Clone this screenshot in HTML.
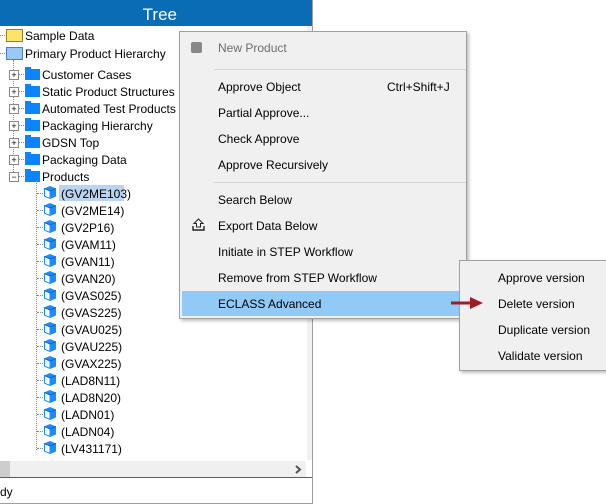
<!DOCTYPE html>
<html><head><style>
body{margin:0;width:606px;height:504px;background:#fff;position:relative;overflow:hidden;font-family:"Liberation Sans",sans-serif;font-size:12px;color:#000}
.a{position:absolute}
.hdr{left:0;top:0;width:312px;height:26px;background:#0a6cb5;color:#fff;font-size:17px;text-align:right;box-sizing:border-box;padding:5px 135px 0 0}
.t{position:absolute;white-space:nowrap;line-height:14px}
.fold{position:absolute;width:15px;height:11px;background:#0a84ff}
.fold:before{content:"";position:absolute;left:0;top:-2px;width:6px;height:3px;background:#0a84ff}
.pb{position:absolute;width:8px;height:8px;border:1px solid #888;background:#fff;font-size:9px;line-height:8px;text-align:center;color:#000}
.cube{position:absolute;width:14px;height:15px}
.dv{position:absolute;border-left:1px dotted #888}
.dh{position:absolute;border-top:1px dotted #888;height:0}
.menu{position:absolute;background:#f0f0f0;border:1px solid #a0a0a0;box-shadow:2px 2px 3px rgba(0,0,0,.25)}
.mi{position:absolute;font-size:12px;white-space:nowrap}
.sep{position:absolute;height:1px;background:#d7d7d7}
</style></head><body>
<div class="a hdr">Tree</div>
<div class="a" style="left:312px;top:0;width:1px;height:504px;background:#a0a0a0"></div>
<div class="a" style="left:0;top:503px;width:313px;height:1px;background:#a0a0a0"></div>
<div class="dh" style="left:0;top:35px;width:5px"></div>
<div class="dh" style="left:0;top:53px;width:5px"></div>
<div class="a" style="left:6px;top:29px;width:15px;height:11px;background:#fce36a;border:1px solid #9a8020"></div>
<div class="t" style="left:25px;top:29px">Sample Data</div>
<div class="a" style="left:6px;top:47px;width:15px;height:11px;background:#9cc8f5;border:1px solid #4a7fc0"></div>
<div class="t" style="left:25px;top:47px">Primary Product Hierarchy</div>
<div class="dv" style="left:13px;top:60px;height:116px"></div>
<div id="l1"></div>
<div class="dv" style="left:36px;top:181px;height:269px"></div>
<script>
var h='';var n=["Customer Cases","Static Product Structures","Automated Test Products","Packaging Hierarchy","GDSN Top","Packaging Data","Products"];
n.forEach(function(s,i){var y=74+i*17;h+='<div class="dh" style="left:18px;top:'+y+'px;width:6px"></div><div class="pb" style="left:9px;top:'+(y-4)+'px">'+(i==6?'−':'+')+'</div><div class="fold" style="left:25px;top:'+(y-5)+'px"></div><div class="t" style="left:42px;top:'+(y-6)+'px">'+s+'</div>';});
var c=["(GV2ME103)","(GV2ME14)","(GV2P16)","(GVAM11)","(GVAN11)","(GVAN20)","(GVAS025)","(GVAS225)","(GVAU025)","(GVAU225)","(GVAX225)","(LAD8N11)","(LAD8N20)","(LADN01)","(LADN04)","(LV431171)"];
c.forEach(function(s,i){var y=193+i*17;h+='<div class="dh" style="left:37px;top:'+y+'px;width:6px"></div><svg class="cube" style="left:43px;top:'+(y-8)+'px" viewBox="0 0 14 15"><path d="M1 3.5L7 1L13 3.5L13 11.5L7 14L1 11.5Z" fill="#1a8cff"/><path d="M2 4.3L6.5 6L6.5 12.6L2 10.9Z" fill="#fff"/><path d="M1 3.5L7 6L13 3.5" stroke="#0060c0" fill="none" stroke-width=".8"/></svg>'+(i==0?'<div class="a" style="left:59px;top:'+(y-8)+'px;width:65px;height:16px;background:#b8d4f0"></div>':'')+'<div class="t" style="left:61px;top:'+(y-6)+'px">'+s+'</div>';});
document.getElementById('l1').outerHTML=h;
</script>
<div class="a" style="left:307px;top:26px;width:5px;height:434px;background:#f0f0f0"></div>
<div class="a" style="left:0;top:461px;width:306px;height:16px;background:#f0f0f0"></div>
<div class="a" style="left:0;top:461px;width:10px;height:16px;background:#cdcdcd"></div>
<svg class="a" style="left:294px;top:465px" width="8" height="9"><path d="M2 1L6 4.5L2 8" stroke="#555" stroke-width="2" fill="none"/></svg>
<div class="a" style="left:0;top:477px;width:312px;height:1px;background:#1a6eb0"></div>
<div class="t" style="left:0;top:485px;font-size:12px">dy</div>
<div class="menu" style="left:179px;top:31px;width:286px;height:286px">
<div class="a" style="left:11px;top:10px;width:11px;height:11px;background:#888;border-radius:2px"></div>
<div class="mi" style="left:38px;top:9px;color:#6d6d6d">New Product</div>
<div class="sep" style="left:34px;top:37px;width:252px"></div>
<div class="mi" style="left:38px;top:48px">Approve Object</div>
<div class="mi" style="left:207px;top:48px">Ctrl+Shift+J</div>
<div class="mi" style="left:38px;top:74px">Partial Approve...</div>
<div class="mi" style="left:38px;top:100px">Check Approve</div>
<div class="mi" style="left:38px;top:126px">Approve Recursively</div>
<div class="sep" style="left:34px;top:150px;width:252px"></div>
<div class="mi" style="left:38px;top:161px">Search Below</div>
<svg class="a" style="left:12px;top:186px" width="13" height="13"><path d="M6.5 1L11 5.5H8.5V9H4.5V5.5H2Z" fill="#fff" stroke="#222"/><path d="M1 8V12H12V8" stroke="#222" fill="none" stroke-width="1.4"/></svg>
<div class="mi" style="left:38px;top:187px">Export Data Below</div>
<div class="mi" style="left:38px;top:213px">Initiate in STEP Workflow</div>
<div class="mi" style="left:38px;top:239px">Remove from STEP Workflow</div>
<div class="a" style="left:2px;top:259px;width:282px;height:25px;background:#91c9f7"></div>
<div class="mi" style="left:38px;top:265px">ECLASS Advanced</div>
</div>
<div class="menu" style="left:459px;top:260px;width:146px;height:109px">
<div class="mi" style="left:38px;top:10px">Approve version</div>
<div class="mi" style="left:38px;top:36px">Delete version</div>
<div class="mi" style="left:38px;top:62px">Duplicate version</div>
<div class="mi" style="left:38px;top:88px">Validate version</div>
</div>
<svg class="a" style="left:450px;top:296px;z-index:5" width="36" height="14"><path d="M1 7H22" stroke="#a01c24" stroke-width="3"/><path d="M20 1L33 7L20 13Z" fill="#a01c24"/></svg>
</body></html>
